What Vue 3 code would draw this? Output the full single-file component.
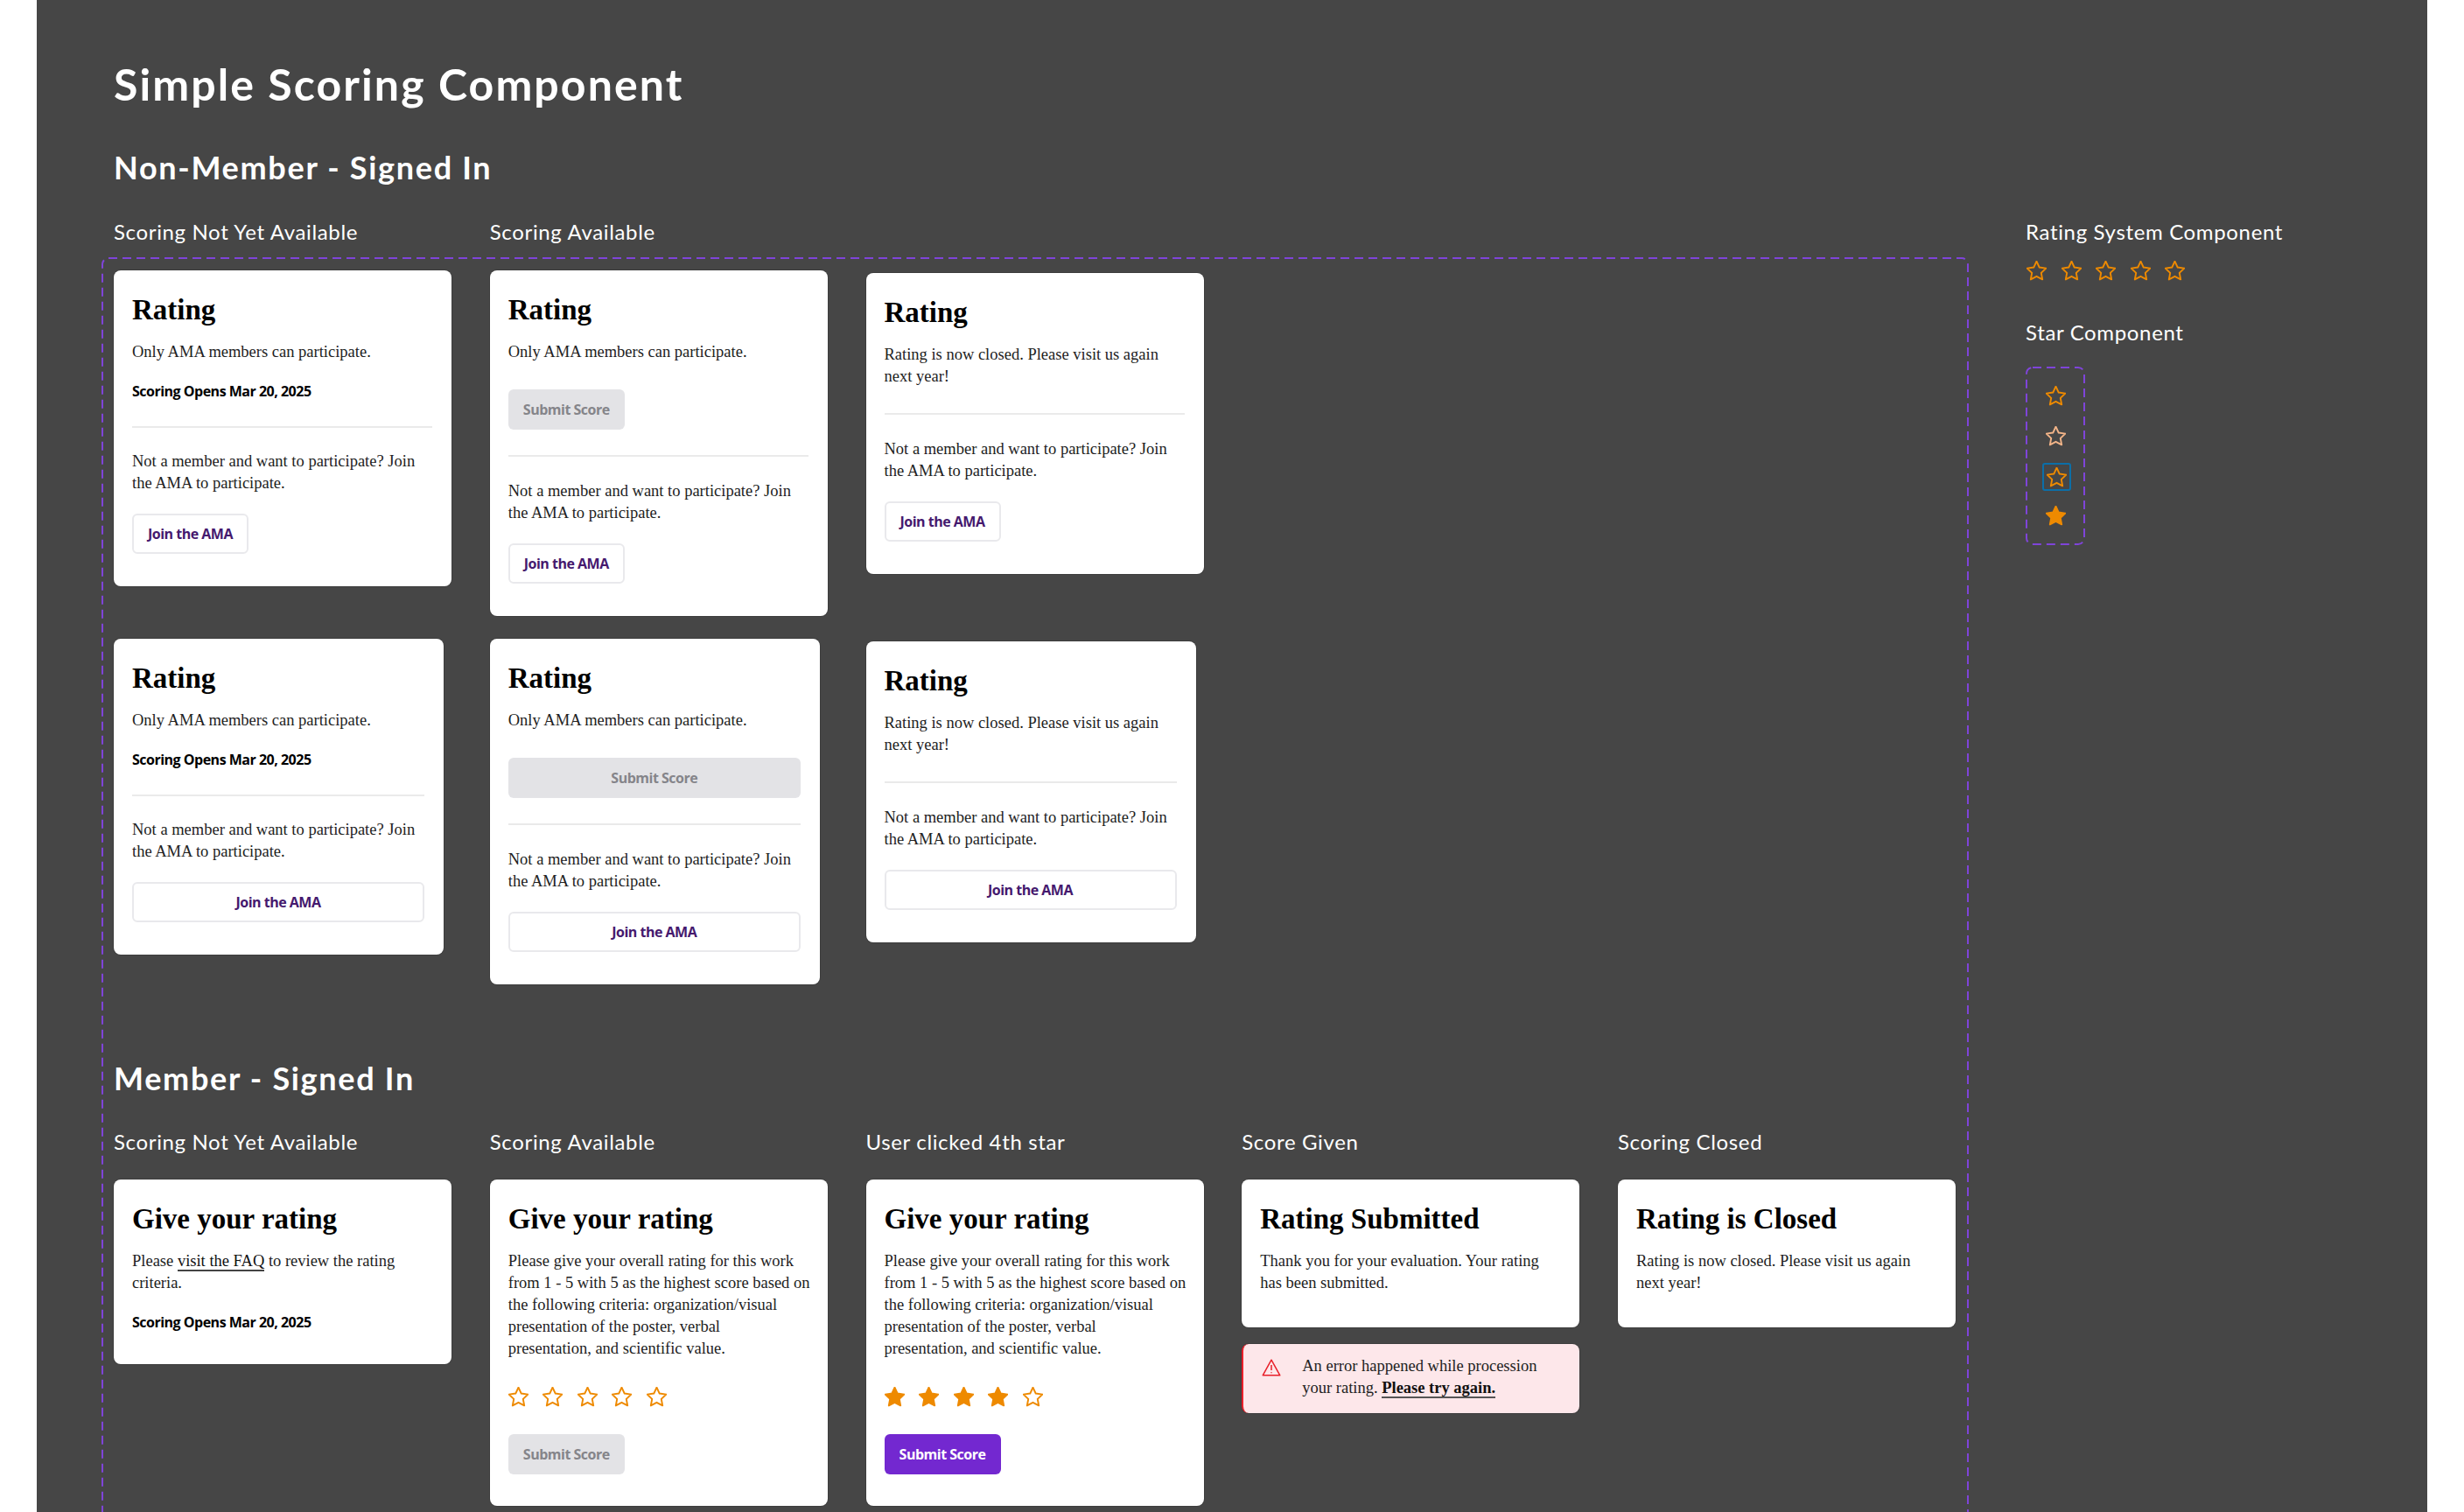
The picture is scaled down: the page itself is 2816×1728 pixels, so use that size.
<script setup>
const five = [1, 2, 3, 4, 5]
const wrong = 'Not a member and want to participate? Join the AMA to participate.'
const criteria = 'Please give your overall rating for this work\nfrom 1 - 5 with 5 as the highest score based on\nthe following criteria: organization/visual\npresentation of the poster, verbal\npresentation, and scientific value.'
const closed = 'Rating is now closed. Please visit us again next year!'
const only = 'Only AMA members can participate.'
const starPath = 'M12 2.6l2.8 6 6.6.9-4.8 4.6 1.2 6.5L12 17.5l-5.8 3.1 1.2-6.5-4.8-4.6 6.6-.9z'
const labels = ['Scoring Not Yet Available', 'Scoring Available', 'User clicked 4th star', 'Score Given', 'Scoring Closed']
</script>

<template>
  <div class="canvas">
    <div class="board">
      <main class="left">
        <h1 class="title">Simple Scoring Component</h1>
        <h2 class="section first">Non-Member - Signed In</h2>
        <div class="labels top-labels">
          <span class="label">Scoring Not Yet Available</span>
          <span class="label">Scoring Available</span>
        </div>
        <div class="dashed">
          <svg class="frame" aria-hidden="true"><rect class="frame-rect" rx="7" ry="7" /></svg>
          <div class="row">
            <article class="card">
              <h3>Rating</h3>
              <p>{{ only }}</p>
              <p class="opens">Scoring Opens Mar 20, 2025</p>
              <hr class="rule-a" />
              <p>{{ wrong }}</p>
              <button class="btn join">Join the AMA</button>
            </article>
            <article class="card">
              <h3>Rating</h3>
              <p>{{ only }}</p>
              <button class="btn off gap-submit">Submit Score</button>
              <hr class="rule-b" />
              <p>{{ wrong }}</p>
              <button class="btn join">Join the AMA</button>
            </article>
            <article class="card nudge">
              <h3>Rating</h3>
              <p class="tight">{{ closed }}</p>
              <hr class="rule-b" />
              <p>{{ wrong }}</p>
              <button class="btn join">Join the AMA</button>
            </article>
          </div>
          <div class="row second">
            <article class="card narrow">
              <h3>Rating</h3>
              <p>{{ only }}</p>
              <p class="opens">Scoring Opens Mar 20, 2025</p>
              <hr class="rule-a" />
              <p>{{ wrong }}</p>
              <button class="btn join wide">Join the AMA</button>
            </article>
            <article class="card narrow">
              <h3>Rating</h3>
              <p>{{ only }}</p>
              <button class="btn off gap-submit wide">Submit Score</button>
              <hr class="rule-b" />
              <p>{{ wrong }}</p>
              <button class="btn join wide">Join the AMA</button>
            </article>
            <article class="card narrow nudge">
              <h3>Rating</h3>
              <p class="tight">{{ closed }}</p>
              <hr class="rule-b" />
              <p>{{ wrong }}</p>
              <button class="btn join wide">Join the AMA</button>
            </article>
          </div>

          <h2 class="section member">Member - Signed In</h2>
          <div class="labels member-labels">
            <span v-for="l in labels" :key="l" class="label">{{ l }}</span>
          </div>
          <div class="row">
            <article class="card short">
              <h3>Give your rating</h3>
              <p>Please <a>visit the FAQ</a> to review the rating criteria.</p>
              <p class="opens">Scoring Opens Mar 20, 2025</p>
            </article>
            <article class="card tall">
              <h3>Give your rating</h3>
              <p>{{ criteria }}</p>
              <div class="stars">
                <svg v-for="n in five" :key="n" class="star" viewBox="2 2 20 20"><path :d="starPath" /></svg>
              </div>
              <button class="btn off">Submit Score</button>
            </article>
            <article class="card tall">
              <h3>Give your rating</h3>
              <p>{{ criteria }}</p>
              <div class="stars">
                <svg v-for="n in five" :key="n" class="star" :class="{ filled: n < 5 }" viewBox="2 2 20 20"><path :d="starPath" /></svg>
              </div>
              <button class="btn on">Submit Score</button>
            </article>
            <div class="stack">
              <article class="card info">
                <h3>Rating Submitted</h3>
                <p>Thank you for your evaluation. Your rating has been submitted.</p>
              </article>
              <div class="alert">
                <svg class="warn" viewBox="0 0 22 20">
                  <path d="M11 1.2 L20.8 18.8 H1.2 Z" />
                  <path d="M11 7v6M11 15.2v1" />
                </svg>
                <p>An error happened while procession your rating. <a class="strong">Please try again.</a></p>
              </div>
            </div>
            <article class="card info">
              <h3>Rating is Closed</h3>
              <p>{{ closed }}</p>
            </article>
          </div>
        </div>
      </main>

      <aside class="side">
        <span class="label">Rating System Component</span>
        <div class="stars side-stars">
          <svg v-for="n in five" :key="n" class="star" viewBox="2 2 20 20"><path :d="starPath" /></svg>
        </div>
        <span class="label star-label">Star Component</span>
        <div class="star-box">
          <svg class="frame" aria-hidden="true"><rect class="frame-rect" rx="7" ry="7" /></svg>
          <svg class="star" viewBox="2 2 20 20"><path :d="starPath" /></svg>
          <svg class="star pale" viewBox="2 2 20 20"><path :d="starPath" /></svg>
          <span class="focus"><svg class="star" viewBox="2 2 20 20"><path :d="starPath" /></svg></span>
          <svg class="star filled" viewBox="2 2 20 20"><path :d="starPath" /></svg>
        </div>
      </aside>
    </div>
  </div>
</template>

<style>
html, body { margin: 0; background: #fff; }
</style>

<style scoped>
.canvas {
  width: 2816px;
  height: 1728px;
  overflow: hidden;
  background: #fff;
  font-family: "Liberation Serif", serif;
}
.board {
  margin: 0 42px;
  height: 1728px;
  box-sizing: border-box;
  background: #464646;
  padding: 66px 0 0 74px;
  display: flex;
  align-items: flex-start;
  overflow: hidden;
}
.left { width: 2134px; flex: none; }
.title, .section, .label { font-family: Lato, sans-serif; color: #fff; margin: 0; }
.title {
  margin-left: 14px;
  font-size: 50px;
  line-height: 60px;
  font-weight: 700;
  letter-spacing: 2.1px;
}
.section {
  font-size: 36px;
  line-height: 44px;
  font-weight: 700;
  letter-spacing: 1.7px;
}
.first { margin: 43px 0 0 14px; }
.label { font-size: 24px; line-height: 32px; font-weight: 400; letter-spacing: 0.65px; white-space: nowrap; }
.labels { display: grid; grid-template-columns: repeat(5, 386px); gap: 43.75px; }
.top-labels { margin: 36px 0 13px 14px; }
.dashed {
  position: relative;
  padding: 15px 14px 200px;
  height: 1700px;
  box-sizing: border-box;
}
.frame {
  position: absolute;
  inset: 0;
  width: 100%;
  height: 100%;
  pointer-events: none;
}
.frame-rect {
  x: 1px;
  y: 1px;
  width: calc(100% - 2px);
  height: calc(100% - 2px);
  fill: none;
  stroke: #7f44d9;
  stroke-width: 2;
  stroke-dasharray: 10 6;
}
.row { display: flex; gap: 43.75px; align-items: flex-start; }
.second { margin-top: 26px; }
.narrow { margin-right: 9px; }
.row .card.narrow { width: 377px; }
.member { margin-top: 85px; }
.member-labels { margin: 35px 0 27px; }

.card {
  width: 386px;
  flex: none;
  box-sizing: border-box;
  background: #fff;
  border-radius: 8px;
  padding: 25px 22px 37px 21px;
  box-shadow: 0 0 0 1px rgba(0, 0, 0, 0.12);
  color: #222;
}
.nudge { margin-top: 3px; }
.card h3 {
  margin: 0 0 16px;
  font-size: 33px;
  line-height: 40px;
  font-weight: 700;
  color: #000;
}
.card p, .alert p {
  margin: 0;
  font-size: 18.5px;
  line-height: 25px;
  color: #222;
}
.card .opens {
  margin-top: 20px;
  font-family: "Open Sans", sans-serif;
  font-size: 16px;
  font-weight: 700;
  letter-spacing: -0.5px;
  color: #000;
}
.card .tight { width: 336px; }
hr { border: 0; height: 2px; background: #eaeaea; }
.rule-a { margin: 27px 0 26px; }
.rule-b { margin: 29px 0 27px; }
.btn {
  display: block;
  width: 133px;
  height: 46px;
  padding: 0;
  box-sizing: border-box;
  border-radius: 6px;
  font-family: "Open Sans", sans-serif;
  font-size: 16px;
  font-weight: 700;
  letter-spacing: -0.5px;
  text-align: center;
}
.wide { width: 100%; }
.join { margin-top: 22px; background: #fff; color: #45196e; border: 2px solid #e9e9ec; }
.off { background: #e3e3e6; color: #85858a; border: 0; }
.on { background: #7328d0; color: #fff; border: 0; }
.gap-submit { margin: 30px 0 0; }

.card a { color: #111; font-weight: 400; border-bottom: 2px solid #444; }
.short { padding-bottom: 35px; }
.tall { padding-bottom: 36px; }
.tall p { white-space: pre; }
.info { padding-bottom: 38px; }
.stack { display: flex; flex-direction: column; gap: 19px; width: 386px; flex: none; }

.stars { display: flex; gap: 16.5px; margin: 31px 0 31px; }
.star {
  display: block;
  width: 23px;
  height: 23px;
  flex: none;
  fill: none;
  stroke: #ee8a00;
  stroke-width: 1.7;
  stroke-linejoin: round;
}
.star.filled { fill: #ee8a00; }
.star.pale { stroke: #f2b488; }

.alert {
  box-sizing: border-box;
  height: 79px;
  background: #fde7ea;
  border-left: 2px solid #e8202a;
  border-radius: 8px;
  padding: 13px 20px 0 21px;
  display: flex;
  gap: 24px;
  box-shadow: 0 0 0 1px rgba(0, 0, 0, 0.12);
}
.warn {
  width: 22px;
  height: 20px;
  flex: none;
  margin-top: 4px;
  fill: none;
  stroke: #e8202a;
  stroke-width: 1.5;
  stroke-linejoin: round;
}
.alert a { color: #111; font-weight: 700; border-bottom: 2px solid #555; }

.side { margin-left: 65px; padding-top: 183px; display: flex; flex-direction: column; align-items: flex-start; }
.side-stars { margin: 17px 0 0 1px; }
.star-label { margin-top: 43px; }
.star-box {
  position: relative;
  box-sizing: border-box;
  margin-top: 23px;
  width: 68px;
  height: 204px;
  padding-top: 22px;
  display: flex;
  flex-direction: column;
  align-items: center;
}
.star-box .star + .star { margin-top: 23px; }
.focus {
  box-sizing: border-box;
  margin: 19px 0 17px 2px;
  width: 33px;
  height: 32px;
  border: 2px solid #0b6fa8;
  border-radius: 3px;
  display: flex;
  align-items: center;
  justify-content: center;
}
</style>
